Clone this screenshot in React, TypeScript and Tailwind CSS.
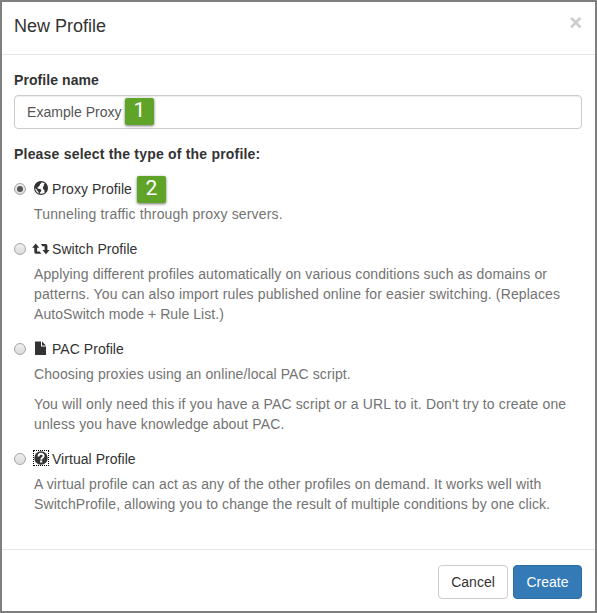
import type { ReactNode } from "react";

function GlobeIcon() {
  return (
    <svg width="14" height="14" viewBox="0 0 14 14" className="block">
      <circle cx="7" cy="7" r="6.4" fill="#fff" stroke="#333" strokeWidth="1.1" />
      <path
        fill="#333"
        d="M0.5 7 C0.4 3.4 3.2 0.4 7 0.4 L7.4 1.4 L7 2.6 L6 3.2 L5.8 4.4 L4.7 5.2 L4.3 6.2 L3.4 6.4 L3.2 7.1 L4.3 7.7 L6.2 7.9 L7.4 9 L7 10.4 L6 11.5 L5.6 13 L4.8 12.7 L4.5 10.9 L3.3 9.7 L2.7 8.4 L1.5 7.4Z M10 4.6 L9.8 3.4 L11.3 2.1 C13 3.5 13.6 5.2 13.5 7.2 C13.3 9.2 12.5 10.6 11.2 11.8 L10.4 10.8 L10.5 9.2 L9.3 8.2 L8.8 6.8 L9.3 5.5Z"
      />
    </svg>
  );
}

function RetweetIcon() {
  return (
    <svg width="18" height="12" viewBox="0 0 18 12" className="block" fill="#333">
      <path d="M3.7 0.5 L7.3 4.7 H5.1 V8.4 H7.7 L9.3 10.7 H3.9 Q2.3 10.7 2.3 9.1 V4.7 H0.1Z" />
      <path d="M14 11.2 L10.4 7 H12.6 V3.3 H10.4 L8.8 1 H13.8 Q15.4 1 15.4 2.6 V7 H17.6Z" />
    </svg>
  );
}

function FileIcon() {
  return (
    <svg width="11" height="14" viewBox="0 0 11 14" className="block" fill="#333">
      <path d="M0 0.5 H6 V5.5 H11 V14 H0Z M7 0.5 L11 4.5 H7Z" />
    </svg>
  );
}

function QuestionIcon() {
  return (
    <svg width="14" height="14" viewBox="0 0 14 14" className="block">
      <circle cx="7" cy="7" r="6.7" fill="#333" />
      <path d="M4.5 5.6 C4.5 1.9 9.6 1.9 9.6 5 C9.6 6.8 7.2 6.8 7.2 8.7" fill="none" stroke="#fff" strokeWidth="1.9" />
      <rect x="6.1" y="9.5" width="2.2" height="2" fill="#fff" />
    </svg>
  );
}

function Radio({ checked = false }: { checked?: boolean }) {
  return (
    <span className="flex size-3 shrink-0 items-center justify-center rounded-full border border-[#a5a5a5] bg-linear-to-b from-[#eeeeee] to-[#dcdcdc]">
      {checked && <span className="size-1.5 rounded-full bg-[#555]" />}
    </span>
  );
}

function Badge({ children, className }: { children: ReactNode; className: string }) {
  return (
    <span
      className={`absolute flex h-[27px] w-[29px] items-center justify-center rounded-[2px] bg-[#5fa328] pb-[2px] font-[family-name:Roboto,sans-serif] text-[21px] leading-none text-white shadow-[0_1px_3px_rgba(0,0,0,0.55)] ${className}`}
    >
      {children}
    </span>
  );
}

type Line = { text: string; tracking: string };

type OptionProps = {
  icon: ReactNode;
  title: string;
  checked?: boolean;
  badge?: ReactNode;
  paragraphs: Line[][];
};

function Option({ icon, title, checked, badge, paragraphs }: OptionProps) {
  return (
    <div className="mb-[15px]">
      <div className="relative flex h-5 items-center">
        <Radio checked={checked} />
        <span className="ml-[6px] flex h-5 w-[18px] shrink-0 items-center justify-center pb-[2px]">{icon}</span>
        <span className="ml-[2px] tracking-[0.04px]">{title}</span>
        {badge}
      </div>
      <div className="ml-5 mt-[5px] flex flex-col gap-[10px] text-[#737373]">
        {paragraphs.map((lines) => (
          <p key={lines[0].text}>
            {lines.map(({ text, tracking }) => (
              <span key={text} className={`block whitespace-nowrap ${tracking}`}>{text}</span>
            ))}
          </p>
        ))}
      </div>
    </div>
  );
}

export default function App() {
  return (
    <div className="flex h-[613px] w-[597px] flex-col border-2 border-[#7f7f7f] bg-white font-['Liberation_Sans',Arial,sans-serif] text-[14px] leading-5 text-[#333]">
      <header className="flex h-[53px] shrink-0 justify-between border-b border-[#e5e5e5] pl-3 pr-[13px]">
        <h1 className="pt-3 text-[18px] leading-6">New Profile</h1>
        <button className="h-10 text-[22px] font-bold leading-[37px] text-[#ccc]">×</button>
      </header>
      <main className="flex-1 px-3 pr-[13px] pt-[15px]">
        <label className="block font-bold tracking-[0.08px]">Profile name</label>
        <div className="relative mt-[5px] flex h-[34px] items-center rounded-[4px] border border-[#ccc] px-3 tracking-[0.04px] text-[#555] shadow-[inset_0_1px_1px_rgba(0,0,0,0.075)]">
          Example Proxy
          <Badge className="left-[110px] top-[2px]">1</Badge>
        </div>
        <p className="mb-[15px] mt-[15px] font-bold tracking-[0.2px]">Please select the type of the profile:</p>
        <Option
          icon={<GlobeIcon />}
          title="Proxy Profile"
          checked
          badge={<Badge className="left-[123px] top-[-3px]">2</Badge>}
          paragraphs={[[{ text: "Tunneling traffic through proxy servers.", tracking: "tracking-[0.17px]" }]]}
        />
        <Option
          icon={<span className="mt-[2px]"><RetweetIcon /></span>}
          title="Switch Profile"
          paragraphs={[[
            { text: "Applying different profiles automatically on various conditions such as domains or", tracking: "tracking-[0.12px]" },
            { text: "patterns. You can also import rules published online for easier switching. (Replaces", tracking: "tracking-[0.14px]" },
            { text: "AutoSwitch mode + Rule List.)", tracking: "tracking-[0.07px]" },
          ]]}
        />
        <Option
          icon={<span className="mr-[2px]"><FileIcon /></span>}
          title="PAC Profile"
          paragraphs={[
            [{ text: "Choosing proxies using an online/local PAC script.", tracking: "tracking-[0.1px]" }],
            [
              { text: "You will only need this if you have a PAC script or a URL to it. Don't try to create one", tracking: "tracking-[0.135px]" },
              { text: "unless you have knowledge about PAC.", tracking: "tracking-[0.11px]" },
            ],
          ]}
        />
        <Option
          icon={<span className="border border-dotted border-black"><QuestionIcon /></span>}
          title="Virtual Profile"
          paragraphs={[[
            { text: "A virtual profile can act as any of the other profiles on demand. It works well with", tracking: "tracking-[0.13px]" },
            { text: "SwitchProfile, allowing you to change the result of multiple conditions by one click.", tracking: "tracking-[0.093px]" },
          ]]}
        />
      </main>
      <footer className="flex h-[62px] shrink-0 justify-end gap-[5px] border-t border-[#e5e5e5] pr-[13px] pt-[15px]">
        <button className="h-[34px] w-[70px] rounded-[4px] border border-[#ccc] bg-white">Cancel</button>
        <button className="h-[34px] w-[69px] rounded-[4px] border border-[#2e6da4] bg-[#337ab7] text-white">Create</button>
      </footer>
    </div>
  );
}
